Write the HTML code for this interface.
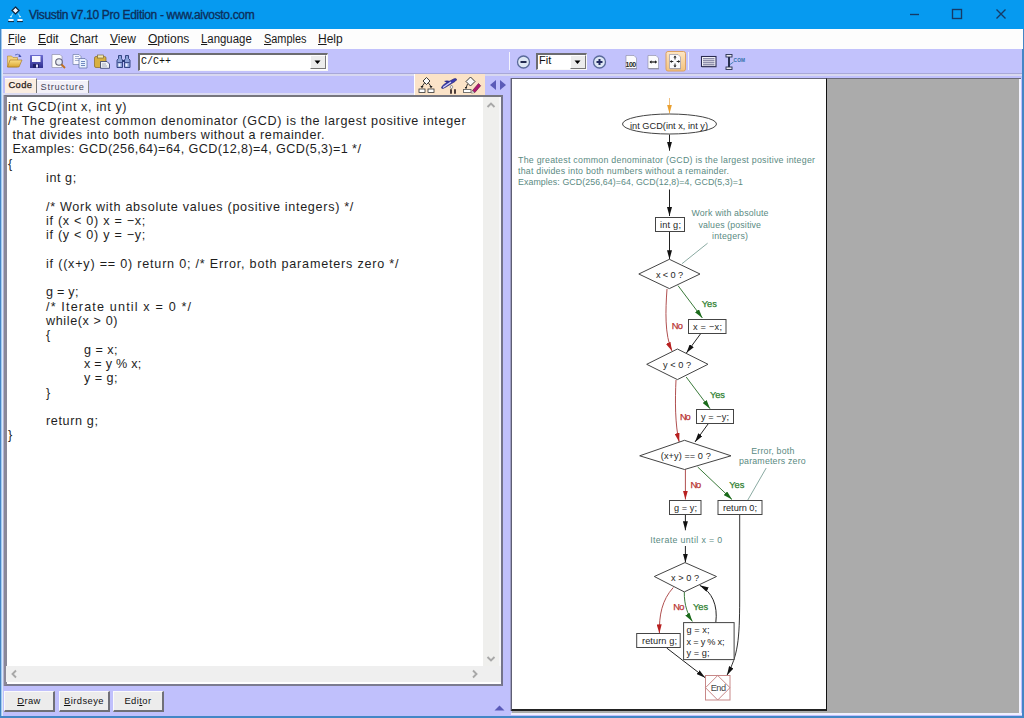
<!DOCTYPE html>
<html><head><meta charset="utf-8">
<style>
*{margin:0;padding:0;box-sizing:border-box}
html,body{width:1024px;height:718px;overflow:hidden;background:#4486c6;font-family:"Liberation Sans",sans-serif}
.a{position:absolute}
#title{left:0;top:0;width:1024px;height:29px;background:#069af0}
#ttext{left:29px;top:8px;font-size:12px;color:#0c2f5c;white-space:nowrap;letter-spacing:-0.33px;-webkit-text-stroke:0.35px #0c2f5c}
#menu{left:1px;top:29px;width:1022px;height:20px;background:#fdfdfd}
.mi{top:32.2px;transform-origin:0 0;font-size:12px;color:#1a1a1a;white-space:nowrap}
#tb{left:1px;top:49px;width:1021px;height:24px;background:#c2c2fc}
#lower{left:1px;top:73px;width:1021px;height:643px;background:#c0c0fc}
#sepline{left:1px;top:73px;width:1021px;height:2.5px;background:#d8d8f0;border-top:0.8px solid #a8a8d8}
#code{left:4px;top:95px;width:499px;height:591px;background:#fff;border:2px solid #7c7c90;border-left:3px solid #8a8898;border-top-color:#76767e;border-right-color:#74748a}
#codetext{left:8px;top:98px;font-size:13px;line-height:14.3px;color:#151515;white-space:pre;tab-size:38px;letter-spacing:0.45px}
#vsb{left:483px;top:97px;width:18px;height:569px;background:#efefed;border-right:2px solid #f6f6f8}
#hsb{left:6px;top:666px;width:495px;height:16px;background:#efefef}
#canvas{left:511px;top:78px;width:316px;height:633px;background:#fff;border-left:1px solid #5e5e74;box-shadow:-1px 0 0 #9c9cc4;border-top:1px solid #68687a;border-right:1px solid #111;border-bottom:2px solid #222}
#gray{left:512px;top:79px;width:507px;height:634px;background:#ababab}
#ptop{left:511px;top:78px;width:510px;height:1px;background:#6a6a78}
#rwhite{left:1019px;top:79px;width:2px;height:636px;background:#f4f4ff}
#bwhite{left:511px;top:713px;width:511px;height:2px;background:#f0f0ff}
.btn{top:691px;height:20.5px;background:#ececec;border:1px solid #fafafa;border-right:2px solid #707078;border-bottom:2px solid #707078;font-size:9.4px;text-align:center;line-height:17.5px;color:#111;letter-spacing:0.45px}
.btn u{text-decoration:underline}
#combo{left:138px;top:53px;width:190px;height:18px;background:#fff;border-top:2px solid #6c6c70;border-left:2px solid #6c6c70;border-right:1px solid #f8f8f8;border-bottom:1px solid #f8f8f8}
.ddb{background:#ececec;border:1px solid #fff;border-right-color:#777;border-bottom-color:#777}
.tab{font-size:10px;white-space:nowrap}
</style></head><body>
<div id="title" class="a"></div>
<svg class="a" style="left:7px;top:6px" width="18" height="17" viewBox="0 0 18 17">
 <path d="M8.5 1 L12 4.5 L8.5 8 L5 4.5Z" fill="#f4f8ff" stroke="#10243a" stroke-width="1.2"/>
 <path d="M6 7.5 L4 10.5 M11 7.5 L13 10.5" stroke="#7ad8ff" stroke-width="1.3"/>
 <path d="M2.8 10 l1.2 2 l1.2 -2z M11.8 10 l1.2 2 l1.2 -2z" fill="#b8f0ff"/>
 <rect x="1.5" y="13" width="5" height="2.2" fill="#eef6ff"/>
 <rect x="10.5" y="13" width="5" height="2.2" fill="#eef6ff"/>
 <path d="M1 15.6 h6 M10 15.6 h6" stroke="#10243a" stroke-width="1"/>
</svg>
<div id="ttext" class="a">Visustin v7.10 Pro Edition - www.aivosto.com</div>
<svg class="a" style="left:905px;top:5px" width="110" height="20" viewBox="0 0 110 20">
 <path d="M5 9.5 H14" stroke="#163a66" stroke-width="1.35"/>
 <rect x="47.5" y="4.5" width="9" height="9" fill="none" stroke="#163a66" stroke-width="1.35"/>
 <path d="M91.5 4.5 L100.5 13.5 M100.5 4.5 L91.5 13.5" stroke="#163a66" stroke-width="1.35"/>
</svg>
<div id="menu" class="a"></div>
<div class="a mi" style="transform:scaleX(0.92);left:8px"><u>F</u>ile</div>
<div class="a mi" style="left:38px"><u>E</u>dit</div>
<div class="a mi" style="transform:scaleX(0.95);left:70px"><u>C</u>hart</div>
<div class="a mi" style="left:110px"><u>V</u>iew</div>
<div class="a mi" style="left:148px"><u>O</u>ptions</div>
<div class="a mi" style="transform:scaleX(0.95);left:201px"><u>L</u>anguage</div>
<div class="a mi" style="transform:scaleX(0.91);left:264px"><u>S</u>amples</div>
<div class="a mi" style="left:318px"><u>H</u>elp</div>
<div id="tb" class="a"></div>
<div id="lower" class="a"></div>
<div id="sepline" class="a"></div>

<!-- toolbar icons -->
<svg class="a" style="left:0px;top:50px" width="140" height="22" viewBox="0 0 140 22">
 <defs>
  <linearGradient id="fy" x1="0" y1="0" x2="0" y2="1"><stop offset="0" stop-color="#fbe08a"/><stop offset="1" stop-color="#d9a530"/></linearGradient>
  <linearGradient id="fl" x1="0" y1="0" x2="0" y2="1"><stop offset="0" stop-color="#6a6ad0"/><stop offset="1" stop-color="#303090"/></linearGradient>
 </defs>
 <!-- folder -->
 <path d="M7.5 6 h4 l1.5 1.5 h4.5 v9.5 h-10z" fill="#f3d27a" stroke="#b08a30" stroke-width="0.6"/>
 <path d="M7.5 17 L10 10 h12 l-3 7z" fill="url(#fy)" stroke="#a07020" stroke-width="0.6"/>
 <path d="M15 5 q3 -2 5 1" stroke="#6070c0" stroke-width="1" fill="none"/>
 <path d="M19.5 4 l2 3 l-3 0z" fill="#4050b0"/>
 <!-- floppy -->
 <rect x="30" y="5" width="13" height="13" fill="url(#fl)" rx="0.5"/>
 <rect x="32" y="6" width="8.5" height="6" fill="#f4f4ff"/>
 <rect x="33" y="14" width="6" height="4" fill="#20206a"/>
 <rect x="36" y="14.5" width="2" height="3" fill="#e0e0ff"/>
 <!-- print preview -->
 <path d="M52 4.5 h8 l2 2 v11 h-10z" fill="#fdfdfd" stroke="#9090a8" stroke-width="0.7"/>
 <circle cx="59" cy="12" r="3.3" fill="#e8ecf4" stroke="#606078" stroke-width="1.1"/>
 <path d="M61.5 14.5 l3.5 3.5" stroke="#c07020" stroke-width="1.8"/>
 <!-- copy -->
 <path d="M73 4.5 h6 l2 2 v8 h-8z" fill="#f8f8ff" stroke="#7080a8" stroke-width="0.7"/>
 <path d="M75 6.5 h4 M75 8.5 h4 M75 10.5 h4" stroke="#8090c0" stroke-width="0.7"/>
 <path d="M79 8.5 h6 l2 2 v7.5 h-8z" fill="#e8f0ff" stroke="#5a6aa0" stroke-width="0.7"/>
 <path d="M81 11.5 h4 M81 13.5 h4 M81 15.5 h4" stroke="#5070b0" stroke-width="0.8"/>
 <!-- paste -->
 <rect x="94.5" y="6.5" width="11.5" height="11" rx="1.5" fill="#d8b040" stroke="#8a6a20" stroke-width="0.7"/>
 <rect x="97.5" y="5" width="6" height="3" fill="#f4e8b0" stroke="#6a5a30" stroke-width="0.6"/>
 <path d="M100.5 11.5 h6.5 l2.5 2.5 v4.3 h-9z" fill="#eef0f6" stroke="#303a68" stroke-width="0.8"/>
 <path d="M102 14 h4 M102 16 h5" stroke="#8890a8" stroke-width="0.7"/>
 <!-- binoculars -->
 <path d="M118.5 5.5 h3 v3 l1 1.5 v7.5 h-5.5 v-7.5 l1.5 -1.5z" fill="#8aa0d8" stroke="#283a78" stroke-width="0.9"/>
 <path d="M125.5 5.5 h3 v3 l1.5 1.5 v7.5 h-5.5 v-7.5 l1 -1.5z" fill="#8aa0d8" stroke="#283a78" stroke-width="0.9"/>
 <rect x="122" y="10" width="3" height="2" fill="#283a78"/>
 <rect x="117.5" y="12" width="5" height="1" fill="#405090"/>
 <rect x="124.5" y="12" width="5" height="1" fill="#405090"/>
 <rect x="118.5" y="13.5" width="2" height="3" fill="#eef4ff"/>
 <rect x="125.5" y="13.5" width="2" height="3" fill="#eef4ff"/>
</svg>
<div id="combo" class="a"></div>
<div class="a" style="left:141px;top:56px;font-size:10px;font-family:'Liberation Mono',monospace;color:#111;letter-spacing:0px">C/C++</div>
<div class="a ddb" style="left:310px;top:55px;width:16px;height:14px"></div>
<svg class="a" style="left:314px;top:60px" width="8" height="5"><path d="M0.5 0.5 h6 l-3 3.5z" fill="#000"/></svg>

<!-- right toolbar -->
<div class="a" style="left:509px;top:52px;width:1px;height:18px;background:#f4f4ff"></div>
<svg class="a" style="left:515px;top:54px;overflow:visible" width="240" height="18" viewBox="0 0 240 18">
 <circle cx="8.5" cy="8" r="6" fill="#dde6f4" stroke="#5a6a9a" stroke-width="1.3"/>
 <path d="M5.5 8 h6" stroke="#222a50" stroke-width="2"/>
 <circle cx="84.5" cy="8" r="6" fill="#dde6f4" stroke="#5a6a9a" stroke-width="1.3"/>
 <path d="M81.5 8 h6 M84.5 5 v6" stroke="#222a60" stroke-width="2"/>
 <!-- 100 page -->
 <path d="M111 1.5 h8 l2.5 2.5 v10.5 h-10.5z" fill="#fbfbfd" stroke="#8888a0" stroke-width="0.6"/><path d="M111.5 14.8 h10.5" stroke="#8a8a98" stroke-width="1"/>
 <text x="110.6" y="13" font-size="7" font-family="Liberation Sans" font-weight="bold" fill="#222" letter-spacing="-0.6">100</text>
 <!-- <-> page -->
 <path d="M133 1.5 h8 l2.5 2.5 v10.5 h-10.5z" fill="#fbfbfd" stroke="#8888a0" stroke-width="0.6"/><path d="M133.5 14.8 h10.5" stroke="#8a8a98" stroke-width="1"/>
 <path d="M135 8 h6.5" stroke="#222" stroke-width="1.3"/>
 <path d="M134.5 8 l2 -1.8 v3.6z M142 8 l-2 -1.8 v3.6z" fill="#222"/>
 <!-- selected -->
 <defs><linearGradient id="selg" x1="0" y1="0" x2="0" y2="1"><stop offset="0" stop-color="#fde6c4"/><stop offset="1" stop-color="#f3c27e"/></linearGradient></defs>
 <rect x="151" y="-2.5" width="19.5" height="19.5" rx="2" fill="url(#selg)" stroke="#dca060" stroke-width="1"/>
 <path d="M154.5 0.5 h8.5 l2.5 2.5 v11.5 h-11z" fill="#fbfbfd" stroke="#8888a0" stroke-width="0.6"/>
 <path d="M155 14.8 h11" stroke="#9a9aa8" stroke-width="0.8"/>
 <path d="M160 2.5 v3 M160 9.5 v3 M155.5 7.5 h2.8 M161.7 7.5 h2.8" stroke="#222" stroke-width="1"/>
 <path d="M160 1.5 l-1.6 2 h3.2z M160 13.5 l-1.6 -2 h3.2z M154.8 7.5 l2 -1.6 v3.2z M165.2 7.5 l-2 -1.6 v3.2z" fill="#222"/>
 <!-- separator -->
 <rect x="173" y="-2" width="1" height="18" fill="#f0f0ff"/>
 <!-- list -->
 <rect x="186.5" y="2.5" width="14.5" height="10" fill="#fafafe" stroke="#2a2a50" stroke-width="1.1"/>
 <path d="M188 4.8 h11.5 M188 6.8 h11.5 M188 8.8 h11.5 M188 10.8 h11.5" stroke="#50507a" stroke-width="0.9"/>
 <path d="M187 13.3 h14.5" stroke="#9090b0" stroke-width="0.8"/>
 <!-- ruler -->
 <path d="M214 2 v12" stroke="#283050" stroke-width="2"/>
 <rect x="211" y="0.5" width="6" height="2.5" fill="#e8e8f0" stroke="#283050" stroke-width="0.9"/>
 <rect x="211" y="13" width="6" height="2.5" fill="#e8e8f0" stroke="#283050" stroke-width="0.9"/>
 <text x="218.5" y="7.5" font-size="4.8" font-family="Liberation Sans" font-weight="bold" fill="#3070a8" letter-spacing="0.2">COM</text>
 <path d="M215 10.5 l3.5 -2.5" stroke="#3a7ab0" stroke-width="0.9"/>
</svg>
<div class="a" style="left:536px;top:53px;width:51px;height:17px;background:#fff;border-top:2px solid #6c6c70;border-left:2px solid #6c6c70;border-right:1px solid #f8f8f8;border-bottom:1px solid #f8f8f8"></div>
<div class="a" style="left:539px;top:54px;font-size:11px;color:#111">Fit</div>
<div class="a ddb" style="left:570px;top:55px;width:16px;height:14px"></div>
<svg class="a" style="left:574px;top:60px" width="8" height="5"><path d="M0.5 0.5 h6 l-3 3.5z" fill="#000"/></svg>

<!-- tabs -->
<div class="a" style="left:5px;top:78px;width:31.5px;height:15.5px;background:#fbede0;border-right:1.5px solid #777;border-top:1px solid #fff"></div>
<div class="a tab" style="left:8.5px;top:78.6px;font-size:9.4px;color:#2a2018;letter-spacing:0.35px;-webkit-text-stroke:0.25px #2a2018">Code</div>
<div class="a" style="left:37px;top:80px;width:52px;height:13.5px;background:#f2f0f8;border-right:1.5px solid #888;border-top:1px solid #fff"></div>
<div class="a tab" style="left:40.5px;top:81.8px;font-size:9.2px;color:#45455a;letter-spacing:0.75px">Structure</div>

<!-- tab icons -->
<div class="a" style="left:414px;top:74px;width:71px;height:21px;background:#fbe3c8;border-left:1px solid #fff"></div>
<svg class="a" style="left:418px;top:76px" width="90" height="18" viewBox="0 0 90 18">
 <!-- icon1 -->
 <path d="M8.5 1.5 L12 5 L8.5 8.5 L5 5z" fill="#fafafa" stroke="#222" stroke-width="0.9"/>
 <path d="M6.5 7 L4 10.5 M10.5 7 L13 10.5" stroke="#222" stroke-width="0.9"/>
 <path d="M2.5 10 l1.5 2.5 l1.5 -2.5z M11.5 10 l1.5 2.5 l1.5 -2.5z" fill="#222"/>
 <rect x="1" y="13" width="6" height="3.5" fill="#fff" stroke="#333" stroke-width="0.8"/>
 <rect x="10" y="13" width="6" height="3.5" fill="#fff" stroke="#333" stroke-width="0.8"/>
 <!-- icon2 -->
 <path d="M23.5 12 q0 -2 3 -4 l9 -5 q2 -1 3 0 q0.5 1 -1.5 2.5 l-9 5.5 q-4 2.5 -4.5 1z" fill="#3a3ab0" stroke="#20206a" stroke-width="0.6"/>
 <path d="M25 11.5 l8 -5.5" stroke="#d8d8f8" stroke-width="1.2"/>
 <path d="M26 5 q3 -1 6 0 l-3 2z" fill="#2a2a90"/>
 <path d="M33.5 9 l1.5 2 l-1.5 2 l-1.5 -2z" fill="#f0f0f8" stroke="#444" stroke-width="0.5"/>
 <path d="M33 14 v3 M37 14 v3" stroke="#3a2a2a" stroke-width="1.8" stroke-linecap="round"/>
 <!-- icon3 -->
 <path d="M52.5 1 L57 5.5 L52.5 10 L48 5.5z" fill="#fafafa" stroke="#222" stroke-width="0.9"/>
 <path d="M49.5 8 L48 12" stroke="#222" stroke-width="0.9"/>
 <path d="M46.8 11 l1.2 2.5 l1.2 -2.5z" fill="#222"/>
 <rect x="45.5" y="13.5" width="7.5" height="3" fill="#fff" stroke="#555" stroke-width="0.8"/>
 <path d="M54.5 14.5 l6 -7 l2.2 2.2 l-6 7z" fill="#b01870" stroke="#601040" stroke-width="0.6"/>
 <path d="M54.5 14.5 l-1 2.8 l3.2 -0.6z" fill="#f4f4f4" stroke="#444" stroke-width="0.4"/>
 <!-- arrows -->
 <path d="M72 9 l6 -5 v10z" fill="#5a5ab8"/>
 <path d="M82 4 v10 l6 -5z" fill="#5a5ab8"/>
</svg>

<div class="a" style="left:3px;top:93px;width:411px;height:2px;background:#dcdcf2"></div><div id="code" class="a"></div><div class="a" style="left:1px;top:29px;width:1px;height:687px;background:#a4ccf2"></div><div class="a" style="left:2px;top:49px;width:1px;height:667px;background:#dce8f8"></div><div class="a" style="left:3px;top:95px;width:1px;height:591px;background:#b4b4d4"></div>
<div id="vsb" class="a"></div>
<div id="hsb" class="a"></div>
<svg class="a" style="left:486px;top:101px" width="10" height="8"><path d="M1.5 6 L5 2.5 L8.5 6" stroke="#a8a8a8" stroke-width="1.9" fill="none"/></svg>
<svg class="a" style="left:486px;top:655px" width="10" height="8"><path d="M1.5 2 L5 5.5 L8.5 2" stroke="#a8a8a8" stroke-width="1.9" fill="none"/></svg>
<svg class="a" style="left:10px;top:669px" width="8" height="10"><path d="M6 1.5 L2.5 5 L6 8.5" stroke="#a8a8a8" stroke-width="1.9" fill="none"/></svg>
<svg class="a" style="left:471px;top:669px" width="8" height="10"><path d="M2 1.5 L5.5 5 L2 8.5" stroke="#a8a8a8" stroke-width="1.9" fill="none"/></svg>
<svg class="a" style="left:0;top:0" width="500" height="460" viewBox="0 0 500 460"><g font-family="Liberation Sans" font-size="12.6" fill="#1e1e1e">
<text x="8" y="110.5" textLength="118.5" lengthAdjust="spacing">int GCD(int x, int y)</text>
<text x="8" y="124.8" textLength="457.7" lengthAdjust="spacing">/* The greatest common denominator (GCD) is the largest positive integer</text>
<text x="12.5" y="139.1" textLength="312.0" lengthAdjust="spacing">that divides into both numbers without a remainder.</text>
<text x="12.5" y="153.4" textLength="348.4" lengthAdjust="spacing">Examples: GCD(256,64)=64, GCD(12,8)=4, GCD(5,3)=1 */</text>
<text x="8" y="167.7">{</text>
<text x="46" y="182.0" textLength="30.2" lengthAdjust="spacing">int g;</text>
<text x="46" y="210.6" textLength="307.3" lengthAdjust="spacing">/* Work with absolute values (positive integers) */</text>
<text x="46" y="224.9" textLength="99.3" lengthAdjust="spacing">if (x &lt; 0) x = −x;</text>
<text x="46" y="239.2" textLength="99.3" lengthAdjust="spacing">if (y &lt; 0) y = −y;</text>
<text x="46" y="267.8" textLength="352.5" lengthAdjust="spacing">if ((x+y) == 0) return 0; /* Error, both parameters zero */</text>
<text x="46" y="296.4" textLength="32.4" lengthAdjust="spacing">g = y;</text>
<text x="46" y="310.7" textLength="145.0" lengthAdjust="spacing">/* Iterate until x = 0 */</text>
<text x="46" y="325.0" textLength="71.5" lengthAdjust="spacing">while(x &gt; 0)</text>
<text x="46" y="339.3">{</text>
<text x="84" y="353.6" textLength="33.5" lengthAdjust="spacing">g = x;</text>
<text x="84" y="367.9" textLength="57.2" lengthAdjust="spacing">x = y % x;</text>
<text x="84" y="382.2" textLength="33.5" lengthAdjust="spacing">y = g;</text>
<text x="46" y="396.5">}</text>
<text x="46" y="425.1" textLength="52.0" lengthAdjust="spacing">return g;</text>
<text x="8" y="439.4">}</text>
</g></svg>
<div id="gray" class="a"></div><div id="ptop" class="a"></div>
<div id="canvas" class="a"></div>

<svg class="a" style="left:512px;top:79px" width="314" height="630" viewBox="512 79 314 630">
<defs>
 <marker id="mb" markerWidth="9" markerHeight="5" refX="9" refY="2.5" orient="auto" markerUnits="userSpaceOnUse"><path d="M0,0 L9,2.5 L0,5z" fill="#111"/></marker>
 <marker id="mr" markerWidth="9" markerHeight="5" refX="9" refY="2.5" orient="auto" markerUnits="userSpaceOnUse"><path d="M0,0 L9,2.5 L0,5z" fill="#b82020"/></marker>
 <marker id="mg" markerWidth="9" markerHeight="5" refX="9" refY="2.5" orient="auto" markerUnits="userSpaceOnUse"><path d="M0,0 L9,2.5 L0,5z" fill="#1a6a1a"/></marker>
 <marker id="mo" markerWidth="9" markerHeight="5" refX="9" refY="2.5" orient="auto" markerUnits="userSpaceOnUse"><path d="M0,0 L9,2.5 L0,5z" fill="#eaa030"/></marker>
</defs>
<g fill="none" stroke-width="1">
 <path d="M669.5 98 V113.5" stroke="#f0c080" marker-end="url(#mo)"/>
 <path d="M669.5 134.5 V150.7" stroke="#222" marker-end="url(#mb)"/>
 <path d="M669.5 189.5 V216" stroke="#222" marker-end="url(#mb)"/>
 <path d="M669.5 231.5 V259.3" stroke="#222" marker-end="url(#mb)"/>
 <path d="M667 289 C665.5 310 664.5 335 672 351" stroke="#b05050" marker-end="url(#mr)"/>
 <path d="M678 285.6 L702.4 318" stroke="#3a7a3a" marker-end="url(#mg)"/>
 <path d="M700.8 333.5 L686.4 353" stroke="#222" marker-end="url(#mb)"/>
 <path d="M676 380 C675 400 675 425 679.2 442" stroke="#b05050" marker-end="url(#mr)"/>
 <path d="M686.2 377 L710 408.7" stroke="#3a7a3a" marker-end="url(#mg)"/>
 <path d="M708.2 423.8 L695 442" stroke="#222" marker-end="url(#mb)"/>
 <path d="M685.4 469 V499.5" stroke="#b05050" marker-end="url(#mr)"/>
 <path d="M697.7 467 L732 499.5" stroke="#3a7a3a" marker-end="url(#mg)"/>
 <path d="M685.4 514.8 V530.3" stroke="#222" marker-end="url(#mb)"/>
 <path d="M685.4 546 V562.6" stroke="#222" marker-end="url(#mb)"/>
 <path d="M673.3 587.5 C662 600 659 615 659.4 633.4" stroke="#b05050" marker-end="url(#mr)"/>
 <path d="M684.3 592 C684 605 688 615 692.4 621.5" stroke="#3a7a3a" marker-end="url(#mg)"/>
 <path d="M715.8 622.6 C718 605 712 592 699.7 585.3" stroke="#222" marker-end="url(#mb)"/>
 <path d="M666.7 648 L705.2 677.7" stroke="#222" marker-end="url(#mb)"/>
 <path d="M739.7 514.8 V600 C739.5 640 738 655 727 675.2" stroke="#333" marker-end="url(#mb)"/>
 <path d="M682 263.7 L707.6 243.2 M766.2 468 L747.8 500" stroke="#8aaaa2"/>
</g>
<g fill="#fff" stroke="#444" stroke-width="1">
 <ellipse cx="669.5" cy="124" rx="47" ry="10"/>
 <rect x="655.5" y="217.5" width="29" height="14"/>
 <path d="M669.4 259.3 L700 274 L669.4 288.6 L638.8 274z"/>
 <rect x="688.5" y="319.5" width="37.5" height="14"/>
 <path d="M677.4 349 L708 364.3 L677.4 379.6 L646.7 364.3z"/>
 <rect x="696.5" y="409.5" width="37" height="14"/>
 <path d="M684.5 440.3 L731 455.8 L684.5 469.5 L639.7 455.8z"/>
 <rect x="669.5" y="500.5" width="31.5" height="14"/>
 <rect x="718" y="500.5" width="44" height="14"/>
 <path d="M685 562.6 L716.5 576.5 L684.3 591.9 L654.3 576.5z"/>
 <rect x="636.7" y="633.5" width="43.5" height="14"/>
 <rect x="683.6" y="622.6" width="50.5" height="37"/>
</g>
<g fill="none" stroke="#c88888" stroke-width="1">
 <rect x="705.5" y="675.5" width="24.5" height="24.5"/>
 <path d="M717.7 675.5 L730 687.7 L717.7 700 L705.5 687.7z"/>
</g>
<g font-family="Liberation Sans" font-size="9.2" fill="#262626">
 <text x="630" y="128.5" textLength="78" lengthAdjust="spacing">int GCD(int x, int y)</text>
 <text x="660" y="228" textLength="21" lengthAdjust="spacing">int g;</text>
 <text x="656" y="278.3" textLength="27" lengthAdjust="spacing">x &lt; 0 ?</text>
 <text x="693" y="330" textLength="29" lengthAdjust="spacing">x = &#8722;x;</text>
 <text x="663" y="368.4" textLength="28" lengthAdjust="spacing">y &lt; 0 ?</text>
 <text x="701" y="420" textLength="28" lengthAdjust="spacing">y = &#8722;y;</text>
 <text x="660.8" y="458.8" textLength="50" lengthAdjust="spacing">(x+y) == 0 ?</text>
 <text x="674" y="511" textLength="23" lengthAdjust="spacing">g = y;</text>
 <text x="723" y="511" textLength="34" lengthAdjust="spacing">return 0;</text>
 <text x="671.1" y="580.9" textLength="28" lengthAdjust="spacing">x &gt; 0 ?</text>
 <text x="642" y="644.4" textLength="35" lengthAdjust="spacing">return g;</text>
 <text x="686.5" y="633.4" textLength="23" lengthAdjust="spacing">g = x;</text>
 <text x="686.5" y="644.9" textLength="38" lengthAdjust="spacing">x = y % x;</text>
 <text x="686.5" y="655.7" textLength="23" lengthAdjust="spacing">y = g;</text>
 <text x="710.7" y="691.3" textLength="15.3" lengthAdjust="spacing" fill="#444">End</text>
</g>
<g font-family="Liberation Sans" font-size="8.8" fill="#5a8a82">
 <text x="518" y="162.6" textLength="297" lengthAdjust="spacing">The greatest common denominator (GCD) is the largest positive integer</text>
 <text x="518" y="173.9" textLength="211" lengthAdjust="spacing">that divides into both numbers without a remainder.</text>
 <text x="518" y="185.1" textLength="225" lengthAdjust="spacing">Examples: GCD(256,64)=64, GCD(12,8)=4, GCD(5,3)=1</text>
 <text x="691.5" y="216" textLength="77" lengthAdjust="spacing">Work with absolute</text>
 <text x="698.5" y="227.8" textLength="62.5" lengthAdjust="spacing">values (positive</text>
 <text x="712" y="238.8" textLength="36" lengthAdjust="spacing">integers)</text>
 <text x="751.3" y="453.5" textLength="43" lengthAdjust="spacing">Error, both</text>
 <text x="739" y="464" textLength="66.7" lengthAdjust="spacing">parameters zero</text>
 <text x="650.2" y="542.6" textLength="72" lengthAdjust="spacing">Iterate until x = 0</text>
</g>
<g font-family="Liberation Sans" font-size="9.3" stroke-width="0.25">
 <text x="671.8" y="329.4" fill="#b83434" stroke="#b83434" textLength="11.2" lengthAdjust="spacing">No</text>
 <text x="680" y="420" fill="#b83434" stroke="#b83434" textLength="10.6" lengthAdjust="spacing">No</text>
 <text x="690.6" y="488" fill="#b83434" stroke="#b83434" textLength="10.6" lengthAdjust="spacing">No</text>
 <text x="673.3" y="610" fill="#b83434" stroke="#b83434" textLength="11" lengthAdjust="spacing">No</text>
 <text x="701.7" y="306.5" fill="#2f802f" stroke="#2f802f" textLength="15.3" lengthAdjust="spacing">Yes</text>
 <text x="710" y="398" fill="#2f802f" stroke="#2f802f" textLength="15" lengthAdjust="spacing">Yes</text>
 <text x="729.3" y="488" fill="#2f802f" stroke="#2f802f" textLength="15" lengthAdjust="spacing">Yes</text>
 <text x="693.1" y="610" fill="#2f802f" stroke="#2f802f" textLength="15" lengthAdjust="spacing">Yes</text>
</g>
</svg>

<div id="rwhite" class="a"></div>
<div id="bwhite" class="a"></div>
<svg class="a" style="left:494px;top:705px" width="12" height="6"><path d="M0.5 5.5 L5.5 0.5 L10.5 5.5z" fill="#5a5ab8"/></svg>
<div class="a btn" style="left:4px;width:51px"><u>D</u>raw</div>
<div class="a btn" style="left:59px;width:51px"><u>B</u>irdseye</div>
<div class="a btn" style="left:113px;width:51px">Edi<u>t</u>or</div>
</body></html>
